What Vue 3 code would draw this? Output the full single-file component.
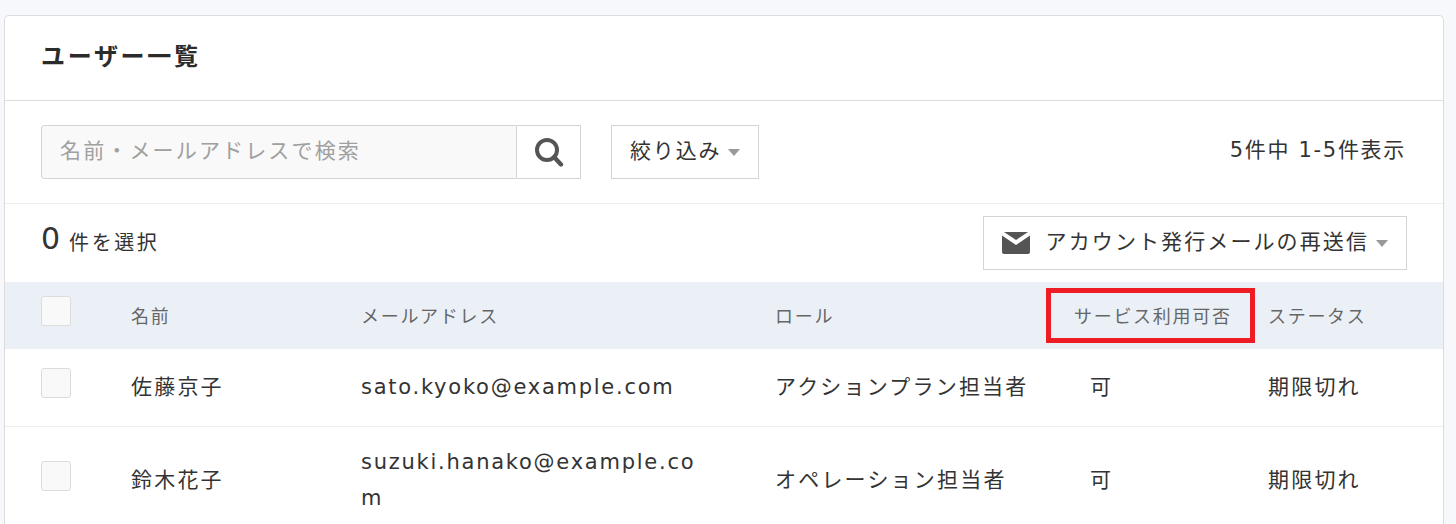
<template>
  <div class="page">
    <section class="card">
      <h1 class="card-title">ユーザー一覧</h1>

      <div class="toolbar">
        <div class="search">
          <input class="search-input" type="text" placeholder="名前・メールアドレスで検索" />
          <button class="search-btn" type="button" aria-label="検索">
            <svg width="30" height="30" viewBox="0 0 30 30">
              <circle cx="13" cy="13" r="10" fill="none" stroke="#555" stroke-width="4" />
              <path d="M20 20l7 7.5" fill="none" stroke="#555" stroke-width="4.4" stroke-linecap="round" />
            </svg>
          </button>
        </div>
        <button class="filter-btn" type="button"><span class="btn-label">絞り込み</span><span class="caret"></span></button>
        <div class="count">5件中 1-5件表示</div>
      </div>

      <div class="selection">
        <div class="selected"><span class="selected-num">0</span> 件を選択</div>
        <button class="resend-btn" type="button">
          <svg width="28" height="22" viewBox="0 0 28 22">
            <path d="M2 0h24L14 8z" fill="#555" />
            <path d="M0 3.5l14 9.5 14-9.5V20a2 2 0 0 1-2 2H2a2 2 0 0 1-2-2z" fill="#555" />
          </svg>
          <span class="btn-label resend-label">アカウント発行メールの再送信</span>
          <span class="caret"></span>
        </button>
      </div>

      <table class="users">
        <colgroup>
          <col class="col-check" />
          <col class="col-name" />
          <col class="col-mail" />
          <col class="col-role" />
          <col class="col-service" />
          <col />
        </colgroup>
        <thead>
          <tr>
            <th><span class="check head-check"></span></th>
            <th>名前</th>
            <th>メールアドレス</th>
            <th>ロール</th>
            <th class="service-head">サービス利用可否<span class="highlight"></span></th>
            <th>ステータス</th>
          </tr>
        </thead>
        <tbody>
          <tr v-for="user in users" :key="user.email">
            <td><span class="check"></span></td>
            <td>{{ user.name }}</td>
            <td class="mail">{{ user.email }}</td>
            <td>{{ user.role }}</td>
            <td class="service">{{ user.service }}</td>
            <td>{{ user.status }}</td>
          </tr>
        </tbody>
      </table>
    </section>
  </div>
</template>

<script setup>
const users = [
  { name: '佐藤京子', email: 'sato.kyoko@example.com', role: 'アクションプラン担当者', service: '可', status: '期限切れ' },
  { name: '鈴木花子', email: 'suzuki.hanako@example.com', role: 'オペレーション担当者', service: '可', status: '期限切れ' }
]
</script>

<style>
html,
body {
  height: 100%;
  overflow: hidden;
  background: #f6f8fc;
}
</style>

<style scoped>
.page {
  height: 524px;
  padding: 15px 12px 0 4px;
  box-sizing: border-box;
  overflow: hidden;
  font-family: "DejaVu Sans", "Noto Sans CJK JP", sans-serif;
  color: #333;
  font-size: 21px;
  letter-spacing: 2.2px;
}

.card {
  background: #fff;
  border: 1px solid #dcdcdc;
  border-bottom: none;
  border-radius: 5px 5px 0 0;
  height: 560px;
}

.card-title {
  margin: 0;
  height: 84px;
  padding-left: 36px;
  line-height: 82px;
  font-size: 24px;
  font-weight: 700;
  letter-spacing: 2.7px;
  color: #2b2b2b;
  border-bottom: 1px solid #dcdcdc;
}

.toolbar {
  display: flex;
  align-items: flex-start;
  height: 102px;
  padding: 0 37px 0 36px;
  border-bottom: 1px solid #eee;
}

.search {
  display: flex;
  margin-top: 24px;
}

.search-input {
  width: 476px;
  height: 54px;
  box-sizing: border-box;
  padding: 0 0 3px 18px;
  border: 1px solid #d4d4d4;
  border-radius: 3px 0 0 3px;
  background: #f9f9f9;
  font: inherit;
  letter-spacing: 2.15px;
  color: #333;
  outline: none;
}

.search-input::placeholder {
  color: #a0a0a0;
  opacity: 1;
}

.search-btn {
  display: flex;
  align-items: center;
  justify-content: center;
  width: 64px;
  height: 54px;
  padding: 0;
  border: 1px solid #d4d4d4;
  border-left: none;
  background: #fff;
}

.filter-btn {
  display: flex;
  align-items: center;
  height: 54px;
  margin: 24px 0 0 30px;
  padding: 0 18px;
  border: 1px solid #d4d4d4;
  background: #fff;
  font: inherit;
  letter-spacing: 1.85px;
  color: #333;
}

.btn-label {
  margin-bottom: 6px;
}

.caret {
  display: inline-block;
  width: 0;
  height: 0;
  margin-left: 7px;
  margin-top: 1px;
  border-left: 6px solid transparent;
  border-right: 6px solid transparent;
  border-top: 7px solid #999;
}

.count {
  margin: 31px 0 0 auto;
  line-height: 36px;
  letter-spacing: 1.7px;
  color: #333;
}

.selection {
  display: flex;
  justify-content: space-between;
  align-items: flex-start;
  height: 78px;
  padding: 0 36px;
}

.selected {
  margin-top: 12px;
  line-height: 46px;
  font-size: 20px;
  letter-spacing: 2.6px;
}

.selected-num {
  font-size: 30px;
  letter-spacing: 0;
  vertical-align: 1px;
}

.resend-btn {
  display: flex;
  align-items: center;
  height: 54px;
  margin-top: 12px;
  padding: 0 18px;
  border: 1px solid #d4d4d4;
  background: #fff;
  font: inherit;
  color: #333;
}

.resend-label {
  margin-left: 16px;
  letter-spacing: 2.1px;
}

.users {
  width: 100%;
  table-layout: fixed;
  border-collapse: collapse;
}

.col-check {
  width: 126px;
}

.col-name {
  width: 230px;
}

.col-mail {
  width: 414px;
}

.col-role {
  width: 299px;
}

.col-service {
  width: 194px;
}

.users th {
  height: 65px;
  box-sizing: content-box;
  padding: 0 0 2px;
  background: #ebf0f7;
  text-align: left;
  font-size: 18px;
  font-weight: 400;
  letter-spacing: 1.7px;
  color: #666;
}

.users td {
  height: 41px;
  box-sizing: content-box;
  padding: 17px 0 19px;
  line-height: 36px;
  border-bottom: 1px solid #eee;
}

.users td:first-child {
  padding: 0 0 0 36px;
}

.users th:first-child {
  padding-left: 36px;
}

.check {
  display: block;
  width: 30px;
  height: 30px;
  box-sizing: border-box;
  border: 1px solid #dcdcdc;
  border-radius: 3px;
  background: #f9f9f9;
  margin-top: -10px;
}

.head-check {
  margin-top: -7px;
}

.mail {
  padding-right: 70px !important;
  letter-spacing: 1.75px;
  word-break: break-all;
}

.service {
  padding-left: 16px !important;
}

.service-head {
  position: relative;
}

.highlight {
  position: absolute;
  left: -28px;
  top: 6px;
  width: 209px;
  height: 55px;
  box-sizing: border-box;
  border: 5px solid #ee1c25;
}
</style>
